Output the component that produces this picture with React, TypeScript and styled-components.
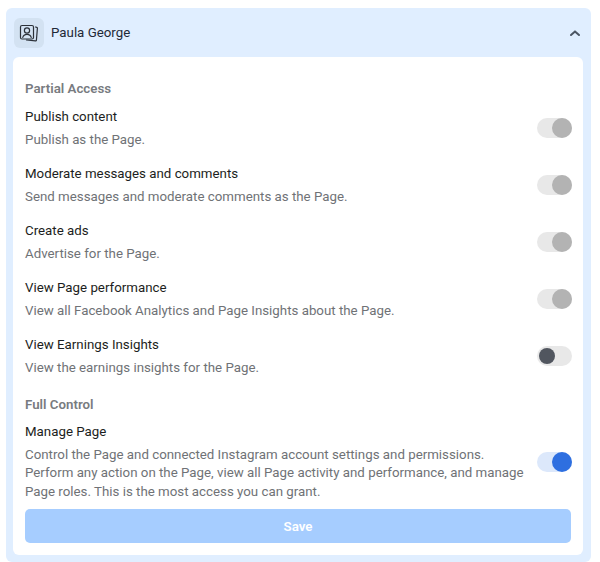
import React, { FC } from 'react';
import styled, { createGlobalStyle } from 'styled-components';

interface IToggle {
  mode: 'disabled' | 'off' | 'on'
}

interface IPermission {
  title: string
  text: React.ReactNode
  mode: IToggle['mode']
}

const partial: IPermission[] = [
  { title: 'Publish content', text: 'Publish as the Page.', mode: 'disabled' },
  { title: 'Moderate messages and comments', text: 'Send messages and moderate comments as the Page.', mode: 'disabled' },
  { title: 'Create ads', text: 'Advertise for the Page.', mode: 'disabled' },
  { title: 'View Page performance', text: 'View all Facebook Analytics and Page Insights about the Page.', mode: 'disabled' },
  { title: 'View Earnings Insights', text: 'View the earnings insights for the Page.', mode: 'off' },
];

const Row: FC<IPermission> = ({ title, text, mode }) => (
  <RowWrap>
    <RowText>
      <RowTitle>{title}</RowTitle>
      <RowDesc>{text}</RowDesc>
    </RowText>
    <Toggle mode={mode}><Knob mode={mode} /></Toggle>
  </RowWrap>
);

const App: FC = () => (
  <>
    <Global />
    <Panel>
      <Header>
        <Identity>
          <Avatar>
            <svg width="20" height="20" viewBox="0 0 20 20" fill="none" stroke="#2b3038" strokeWidth="1.2" strokeLinejoin="round" strokeLinecap="round">
              <rect x="1.5" y="2.5" width="13" height="13.5" rx="1.5" />
              <circle cx="8" cy="7.5" r="2.6" />
              <path d="M3.8 14.5c.5-2.4 2.2-3.2 4.2-3.2s3.7.8 4.2 3.2" />
              <path d="M16.5 4l1.3.3c.4.1.6.5.6.9l-1 12c0 .5-.5.8-.9.7l-9-.9" />
            </svg>
          </Avatar>
          <Name>Paula George</Name>
        </Identity>
        <svg width="12" height="8" viewBox="0 0 12 8" fill="none" stroke="#4b5563" strokeWidth="2" strokeLinecap="round" strokeLinejoin="round">
          <path d="M2 6l4-3.6L10 6" />
        </svg>
      </Header>
      <Card>
        <SectionTitle>Partial Access</SectionTitle>
        <Rows>
          {partial.map(p => <Row key={p.title} {...p} />)}
        </Rows>
        <SectionTitle second>Full Control</SectionTitle>
        <Row
          title="Manage Page"
          mode="on"
          text={<>Control the Page and connected Instagram account settings and permissions.<br />Perform any action on the Page, view all Page activity and performance, and manage<br />Page roles. This is the most access you can grant.</>}
        />
        <Save>Save</Save>
      </Card>
    </Panel>
  </>
);

const Global = createGlobalStyle`
    html, body {
      margin: 0;
      background: #fff;
    }
    body {
      font-family: Roboto, "Liberation Sans", sans-serif;
    }
  `,
  Panel = styled.div`
    box-sizing: border-box;
    width: 585px;
    height: 554px;
    margin: 8px 0 0 6px;
    padding: 0 8px 7px 7px;
    background: #e0eeff;
    border-radius: 6px;
    display: flex;
    flex-direction: column;
  `,
  Header = styled.div`
    height: 49px;
    flex-shrink: 0;
    display: flex;
    align-items: center;
    justify-content: space-between;
    padding: 0 2px 0 1px;
  `,
  Identity = styled.div`
    display: flex;
    align-items: center;
    gap: 7px;
  `,
  Avatar = styled.div`
    width: 30px;
    height: 30px;
    border-radius: 6px;
    background: #d3e2f2;
    display: flex;
    align-items: center;
    justify-content: center;
  `,
  Name = styled.div`
    font-size: 13.3px;
    color: #1f2937;
  `,
  Card = styled.div`
    flex: 1;
    background: #fff;
    border-radius: 6px;
    padding: 24px 12px 12px;
    display: flex;
    flex-direction: column;
  `,
  SectionTitle = styled.div<{ second?: boolean }>`
    font-size: 13.3px;
    line-height: 16px;
    font-weight: 600;
    color: #787b80;
    margin-top: ${props => props.second ? '20px' : '0'};
    margin-bottom: ${props => props.second ? '9px' : '10px'};
  `,
  Rows = styled.div`
    display: flex;
    flex-direction: column;
    gap: 15px;
  `,
  RowWrap = styled.div`
    display: flex;
    align-items: center;
    justify-content: space-between;
  `,
  RowText = styled.div`
    display: flex;
    flex-direction: column;
    gap: 3.5px;
  `,
  RowTitle = styled.div`
    font-size: 13.3px;
    line-height: 20px;
    color: #1c1e21;
  `,
  RowDesc = styled.div`
    font-size: 13.3px;
    line-height: 18.5px;
    color: #6f7276;
  `,
  Toggle = styled.div<IToggle>`
    width: 35px;
    height: 20px;
    border-radius: 10px;
    margin-right: -1px;
    position: relative;
    flex-shrink: 0;
    background: ${props => props.mode === 'on' ? '#dce8fb' : '#e8e8e8'};
  `,
  Knob = styled.div<IToggle>`
    position: absolute;
    border-radius: 50%;
    width: ${props => props.mode === 'off' ? '16px' : '20px'};
    height: ${props => props.mode === 'off' ? '16px' : '20px'};
    top: ${props => props.mode === 'off' ? '2px' : '0'};
    left: ${props => props.mode === 'off' ? '2px' : '15px'};
    background: ${props => props.mode === 'on' ? '#2e6fe0' : props.mode === 'off' ? '#51565f' : '#b3b3b3'};
  `,
  Save = styled.button`
    margin-top: 8px;
    height: 34px;
    width: 100%;
    border: 0;
    border-radius: 5px;
    background: #a6cdff;
    color: #fff;
    font-family: inherit;
    font-size: 13.3px;
    font-weight: 600;
  `;

export default App;
